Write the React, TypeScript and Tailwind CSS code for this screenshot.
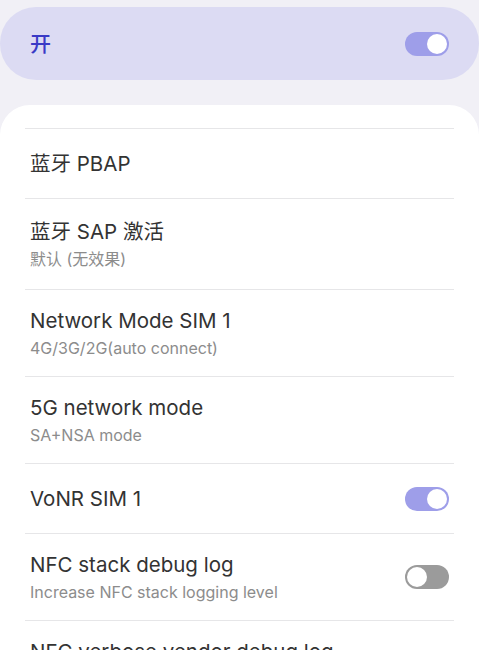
import React from "react";

type Row = {
  title: string;
  summary?: string;
  toggle?: boolean;
  height: string;
};

const rows: Row[] = [
  { title: "蓝牙 PBAP", height: "h-[69px]" },
  { title: "蓝牙 SAP 激活", summary: "默认 (无效果)", height: "h-[90px]" },
  { title: "Network Mode SIM 1", summary: "4G/3G/2G(auto connect)", height: "h-[86px]" },
  { title: "5G network mode", summary: "SA+NSA mode", height: "h-[86px]" },
  { title: "VoNR SIM 1", toggle: true, height: "h-[69px]" },
  {
    title: "NFC stack debug log",
    summary: "Increase NFC stack logging level",
    toggle: false,
    height: "h-[86px]",
  },
  { title: "NFC verbose vendor debug log", summary: "Include additional vendor logs", toggle: false, height: "h-[86px]" },
];

const Switch: React.FC<{ on: boolean }> = ({ on }) =>
  on ? (
    <div className="flex h-[24px] w-[44px] shrink-0 items-center justify-end rounded-full bg-[#9e9ee9] px-[2px]">
      <div className="h-[20px] w-[20px] rounded-full bg-white" />
    </div>
  ) : (
    <div className="flex h-[24px] w-[44px] shrink-0 items-center justify-start rounded-full bg-[#9b9b9b] px-[2px]">
      <div className="h-[20px] w-[20px] rounded-full bg-white" />
    </div>
  );

export default function App() {
  return (
    <div
      className="h-[650px] w-[479px] overflow-hidden bg-[#f1f0f6]"
      style={{ fontFamily: "Inter, 'Noto Sans CJK SC', sans-serif" }}
    >
      <div className="pt-[7px]">
        <div className="flex h-[73px] items-center justify-between rounded-[36px] bg-[#dcdbf3] pl-[30px] pr-[30px]">
          <span className="text-[21px] font-medium text-[#3a3ac6]">开</span>
          <Switch on />
        </div>
      </div>

      <div className="mt-[25px] rounded-t-[30px] bg-white px-[25px] pt-[23px]">
        {rows.map((row) => (
          <div key={row.title} className="border-t border-[#e6e6e8]">
            <div className={`flex items-center justify-between pl-[5px] pr-[5px] ${row.height}`}>
              <div className="flex flex-col">
                <span className="whitespace-nowrap text-[20.5px] leading-[26px] text-[#333333]">{row.title}</span>
                {row.summary && (
                  <span className="mt-[3px] whitespace-nowrap text-[16px] leading-[22px] text-[#8c8c8c]">
                    {row.summary}
                  </span>
                )}
              </div>
              {row.toggle !== undefined && <Switch on={row.toggle} />}
            </div>
          </div>
        ))}
      </div>
    </div>
  );
}
